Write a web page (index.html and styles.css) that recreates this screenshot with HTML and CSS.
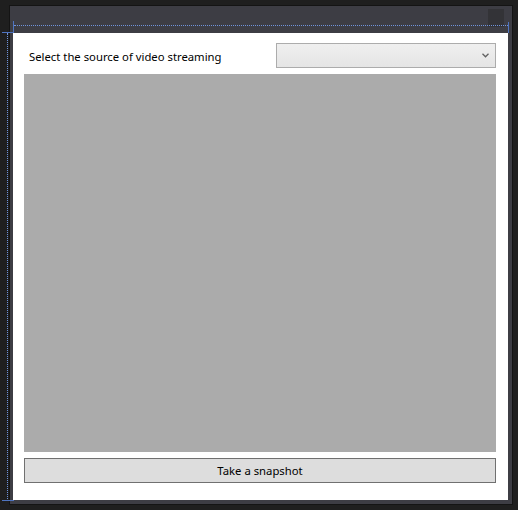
FILE: index.html
```html
<!DOCTYPE html>
<html>
<head>
<meta charset="utf-8">
<link rel="stylesheet" href="styles.css">
</head>
<body>
<div class="desk">
  <div class="window">
    <div class="titlebar"><div class="close-box"></div></div>
    <div class="client">
      <div class="source-row">
        <span class="label">Select the source of video streaming</span>
        <div class="combo">
          <svg class="chev" width="7" height="5" viewBox="0 0 7 5"><path d="M0.5 0.8 L3.5 3.8 L6.5 0.8" fill="none" stroke="#606060" stroke-width="1.3"/></svg>
        </div>
      </div>
      <div class="video"></div>
      <button class="snap">Take a snapshot</button>
    </div>
  </div>
  <div class="guide guide-h"></div>
  <div class="guide guide-v"></div>
  <div class="mark mark-tl-h"></div>
  <div class="mark mark-tl-v"></div>
  <div class="mark mark-tr-v"></div>
  <div class="mark mark-bl-h"></div>
</div>
</body>
</html>
```
FILE: styles.css
```css
html, body {
  margin: 0;
  padding: 0;
  background: #1e1e1e;
}
.desk {
  position: relative;
  width: 518px;
  height: 510px;
  background: #1f1f1f;
  padding: 6px 0 0 10px;
  box-sizing: border-box;
  font-family: "Noto Sans", "Open Sans", sans-serif;
}
.window {
  width: 502px;
  height: 498px;
  box-sizing: border-box;
  background: #3d3d44;
  padding: 0 4px 4px 3px;
  display: flex;
  flex-direction: column;
  box-shadow: 0 0 0 1px #141414;
}
.titlebar {
  height: 27px;
  display: flex;
  justify-content: flex-end;
  padding: 3px 4px 0 0;
  box-sizing: border-box;
}
.close-box {
  width: 16px;
  height: 18px;
  background: #333337;
}
.client {
  flex: 1;
  background: #ffffff;
  padding: 10px 12px 17px 11px;
  display: flex;
  flex-direction: column;
  gap: 6px;
  box-sizing: border-box;
}
.source-row {
  display: flex;
  align-items: center;
  justify-content: space-between;
  height: 25px;
}
.label {
  font-size: 11.3px;
  color: #000;
  padding: 2px 0 0 5px;
}
.combo {
  width: 220px;
  height: 25px;
  box-sizing: border-box;
  border: 1px solid #acacac;
  background: linear-gradient(#efefef, #e5e5e5);
  display: flex;
  align-items: center;
  justify-content: flex-end;
  padding-right: 6px;
}
.video {
  flex: 1;
  background: #ababab;
}
.snap {
  height: 25px;
  border: 1px solid #707070;
  background: #dddddd;
  font-family: inherit;
  font-size: 11.3px;
  color: #000;
  padding: 0;
}
.guide {
  position: absolute;
}
.guide-h {
  left: 14px;
  top: 25px;
  width: 494px;
  border-top: 1px dotted #6f93dc;
}
.guide-v {
  left: 7px;
  top: 33px;
  height: 466px;
  border-left: 1px dotted #6f93dc;
}
.mark {
  position: absolute;
  background: #4f74c0;
}
.mark-tl-h { left: 2px; top: 32px; width: 12px; height: 1px; }
.mark-tl-v { left: 13px; top: 21px; width: 1px; height: 12px; }
.mark-tr-v { left: 508px; top: 22px; width: 1px; height: 11px; }
.mark-bl-h { left: 2px; top: 500px; width: 12px; height: 1px; }
```
